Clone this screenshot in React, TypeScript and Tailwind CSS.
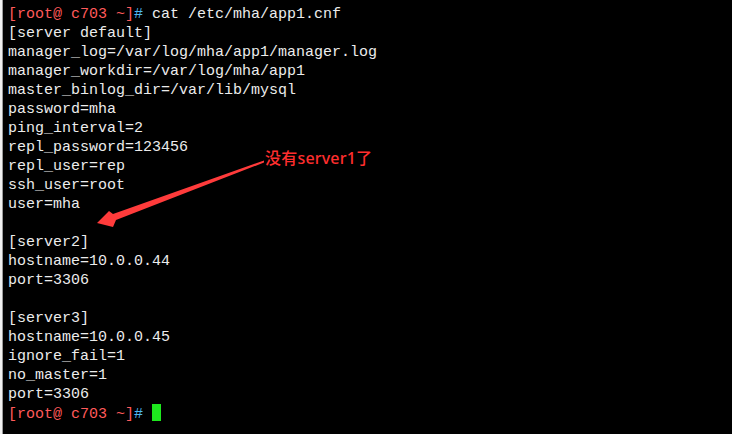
const lines: string[] = [
  '[server default]',
  'manager_log=/var/log/mha/app1/manager.log',
  'manager_workdir=/var/log/mha/app1',
  'master_binlog_dir=/var/lib/mysql',
  'password=mha',
  'ping_interval=2',
  'repl_password=123456',
  'repl_user=rep',
  'ssh_user=root',
  'user=mha',
  '',
  '[server2]',
  'hostname=10.0.0.44',
  'port=3306',
  '',
  '[server3]',
  'hostname=10.0.0.45',
  'ignore_fail=1',
  'no_master=1',
  'port=3306',
];

function Prompt() {
  return (
    <>
      <span className="text-[#ff5a5a]">[root@ c703 ~]</span>
      <span className="text-[#4fb8f0]">#</span>{' '}
    </>
  );
}

export default function App() {
  return (
    <div className="relative w-[732px] h-[434px] overflow-hidden bg-black flex">
      <div className="w-[3px] bg-[#f0f0f0] border-r border-[#9a9a9a]" />
      <div
        className="flex-1 flex flex-col pt-[5px] pl-[5px] text-[15px] leading-[19px] text-[#ececec] whitespace-pre"
        style={{ fontFamily: '"Liberation Mono", "DejaVu Sans Mono", monospace' }}
      >
        <div>
          <Prompt />
          cat /etc/mha/app1.cnf
        </div>
        {lines.map((line, i) => (
          <div key={i} className="h-[19px]">
            {line}
          </div>
        ))}
        <div className="h-[19px]">
          <Prompt />
          <span className="inline-block align-[-3px] w-[9px] h-[17px] bg-[#1ee81e]" />
        </div>
      </div>

      {/* annotation */}
      <div
        className="absolute left-[265px] top-[148px] text-[16px] leading-[20px] font-medium text-[#ff2e2e] tracking-[0.2px]"
        style={{ fontFamily: '"Noto Sans", "Noto Sans CJK SC", sans-serif' }}
      >
        没有server1了
      </div>
      <svg className="absolute left-0 top-0" width="732" height="434">
        <polygon
          points="97,223 109,211 113,214 264,160.5 264,162.5 116,220 113,227"
          fill="#ff3b3b"
        />
      </svg>
    </div>
  );
}
